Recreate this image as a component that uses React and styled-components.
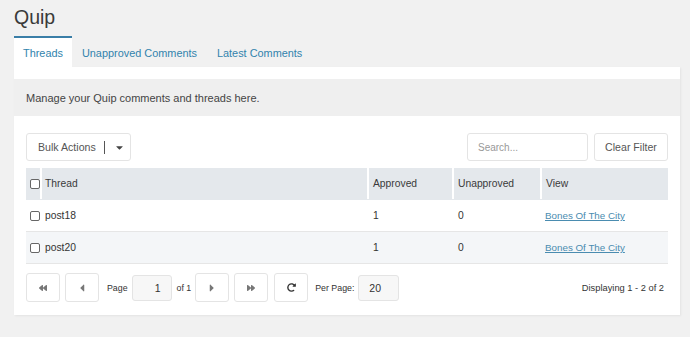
import React from "react";
import styled, { createGlobalStyle } from "styled-components";
import * as FaIcons from "react-icons/fa";

const GlobalStyle = createGlobalStyle`
	body {
		margin: 0;
		background: #f1f1f1;
		font-family: "Liberation Sans", Arial, sans-serif;
		color: #444;
		white-space: nowrap;
	}
`;

const Page = styled.div`
	padding: 0 10px 0 14px;
	height: 337px;
	box-sizing: border-box;
`;

const Title = styled.h1`
	margin: 0;
	height: 36px;
	font-size: 19.5px;
	font-weight: 400;
	color: #3a3a3a;
	line-height: 36px;
	position: relative;
	top: -1px;
`;

const Tabs = styled.div`
	display: flex;
	height: 31px;
`;

const Tab = styled.div`
	display: flex;
	align-items: center;
	padding: 1px ${({ active }) => (active ? 9 : 10)}px 0;
	font-size: 10.9px;
	color: #3183ad;
	box-sizing: border-box;
	background: ${({ active }) => (active ? "#fff" : "transparent")};
	border-top: 2px solid ${({ active }) => (active ? "#3a7ea7" : "transparent")};
`;

const Panel = styled.div`
	background: #fff;
	padding-top: 12px;
	box-shadow: 1px 1px 2px rgba(0, 0, 0, 0.06);
`;

const Description = styled.div`
	background: #efefef;
	height: 37px;
	display: flex;
	align-items: center;
	padding-left: 12px;
	font-size: 11px;
	color: #444;
`;

const Body = styled.div`
	padding: 17px 12px 13px;
`;

const Toolbar = styled.div`
	display: flex;
	align-items: center;
	height: 28px;
`;

const Button = styled.div`
	display: flex;
	align-items: center;
	justify-content: ${({ left }) => (left ? "flex-start" : "center")};
	height: 28px;
	box-sizing: border-box;
	border: 1px solid #e4e4e4;
	border-radius: 3px;
	background: #fff;
	font-size: ${({ fs }) => fs ?? 11}px;
	color: #555;
	padding: 0 ${({ pad }) => pad ?? 0}px;
	width: ${({ w }) => (w ? `${w}px` : "auto")};
	margin-left: ${({ ml }) => ml ?? 0}px;
	flex-shrink: 0;

	svg {
		flex-shrink: 0;
	}
`;

const Divider = styled.span`
	width: 1px;
	height: 13px;
	background: #555;
	margin: 0 9px 0 8px;
	flex-shrink: 0;
`;

const Spacer = styled.div`
	flex: 1;
`;

const Input = styled.div`
	display: flex;
	align-items: center;
	box-sizing: border-box;
	height: ${({ h }) => h ?? 28}px;
	width: ${({ w }) => w}px;
	border: 1px solid #e4e4e4;
	border-radius: 3px;
	background: ${({ bg }) => bg ?? "#fff"};
	font-size: ${({ fs }) => fs ?? 11}px;
	color: ${({ muted }) => (muted ? "#999" : "#333")};
	padding: 0 ${({ pad }) => pad ?? 10}px;
	justify-content: ${({ right }) => (right ? "flex-end" : "flex-start")};
	margin-left: ${({ ml }) => ml ?? 0}px;
	flex-shrink: 0;
`;

const Table = styled.div`
	margin-top: 7px;
	font-size: 10.3px;
	color: #333;
`;

const Row = styled.div`
	display: grid;
	grid-template-columns: 14px 327px 85px 88px 1fr;
	height: 32px;
	background: ${({ bg }) => bg};
	border-bottom: 1px solid ${({ head }) => (head ? "transparent" : "#e6e6e6")};
	box-sizing: border-box;
`;

const Cell = styled.div`
	display: flex;
	align-items: center;
	padding-left: ${({ pl }) => pl ?? 4}px;
	border-left: ${({ sep }) => (sep ? "2px solid #fff" : "none")};
	color: ${({ head }) => (head ? "#3a3a3a" : "#333")};
`;

const Check = styled.span`
	width: 8px;
	height: 8px;
	border: 1px solid #666;
	border-radius: 2px;
	background: #fff;
	margin-left: 4px;
	flex-shrink: 0;
`;

const ViewLink = styled.a`
	color: #4a8cb0;
	text-decoration: underline;
	font-size: 9.8px;
`;

const Pager = styled.div`
	display: flex;
	align-items: center;
	margin-top: 9px;
	height: 29px;
	font-size: 8.8px;
	color: #333;
`;

const PagerButton = styled(Button)`
	width: 34px;
	height: 29px;
	padding: 0;
	color: ${({ dark }) => (dark ? "#333" : "#777")};
`;

const Label = styled.span`
	margin: 0 ${({ mr }) => mr ?? 4}px 0 ${({ ml }) => ml ?? 8}px;
`;

const Status = styled.span`
	margin-left: auto;
	margin-right: 4px;
	font-size: 9.3px;
	color: #333;
`;

const rows = [
	{ thread: "post18", approved: 1, unapproved: 0, view: "Bones Of The City" },
	{ thread: "post20", approved: 1, unapproved: 0, view: "Bones Of The City" },
];

const App = () => {
	return (
		<>
			<GlobalStyle />
			<Page>
				<Title>Quip</Title>
				<Tabs>
					<Tab active>Threads</Tab>
					<Tab>Unapproved Comments</Tab>
					<Tab>Latest Comments</Tab>
				</Tabs>
				<Panel>
					<Description>Manage your Quip comments and threads here.</Description>
					<Body>
						<Toolbar>
							<Button w={105} pad={11} fs={10.6} left>
								Bulk Actions
								<Divider />
								<FaIcons.FaCaretDown size={11} color="#444" />
							</Button>
							<Spacer />
							<Input w={121} muted fs={10}>Search...</Input>
							<Button ml={6} w={74} fs={10.6}>Clear Filter</Button>
						</Toolbar>
						<Table>
							<Row head bg="#e4e8ec">
								<Cell pl={0}><Check /></Cell>
								<Cell sep pl={3} head>Thread</Cell>
								<Cell sep head>Approved</Cell>
								<Cell sep head>Unapproved</Cell>
								<Cell sep head>View</Cell>
							</Row>
							{rows.map((row, index) => (
								<Row key={index} bg={index % 2 ? "#f4f6f8" : "#fff"}>
									<Cell pl={0}><Check /></Cell>
									<Cell pl={5}>{row.thread}</Cell>
									<Cell pl={6}>{row.approved}</Cell>
									<Cell pl={6}>{row.unapproved}</Cell>
									<Cell pl={5}><ViewLink href="#">{row.view}</ViewLink></Cell>
								</Row>
							))}
						</Table>
						<Pager>
							<PagerButton><FaIcons.FaBackward size={8} /></PagerButton>
							<PagerButton ml={5}><FaIcons.FaCaretLeft size={12} /></PagerButton>
							<Label>Page</Label>
							<Input w={40} h={26} bg="#f7f7f7" fs={10.5} right>1</Input>
							<Label ml={5} mr={4}>of 1</Label>
							<PagerButton><FaIcons.FaCaretRight size={12} /></PagerButton>
							<PagerButton ml={5}><FaIcons.FaForward size={8} /></PagerButton>
							<PagerButton ml={6} dark><FaIcons.FaRedoAlt size={9} /></PagerButton>
							<Label ml={7} mr={4}>Per Page:</Label>
							<Input w={41} h={26} bg="#f7f7f7" fs={10.5}>20</Input>
							<Status>Displaying 1 - 2 of 2</Status>
						</Pager>
					</Body>
				</Panel>
			</Page>
		</>
	);
};

export default App;
